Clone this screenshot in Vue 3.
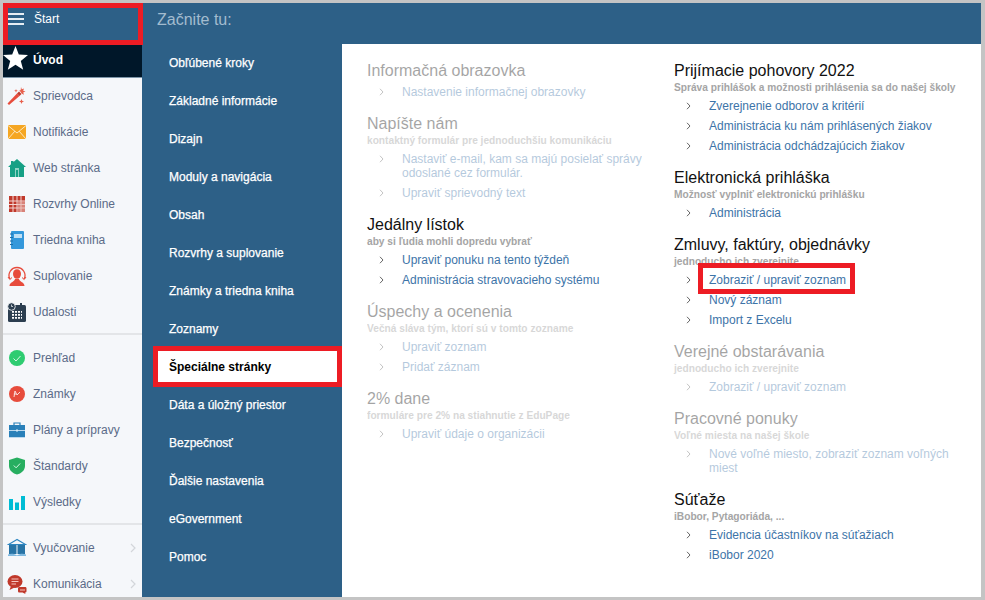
<script setup>
const star = '<path d="M12.5 0l3.3 8.6 9.2.5-7.2 5.8 2.4 8.9-7.700-5-7.700 5 2.400-8.900L0 9.100l9.200-.5z" fill="#fff"/>'
const icons = {
  wand: '<path d="M2 19l-1.500-1.500L10 7.500l2.500 2.500z" fill="#e74c3c"/><path d="M10 7.500l2.500 2.500 2-2L12 5.500z" fill="#c0392b"/><path d="M14 1l.8 2.300L17 2.500l-.8 2.300 2.300.8-2.300.8.800 2.300-2.200-1-1.300-2-1.300-1 1.500-.8zM14.500 13l.7 1.800 1.800.7-1.800.7-.7 1.800-.7-1.800-1.800-.7 1.800-.7zM9 3l.5 1.300 1.300.5-1.300.5L9 6.600l-.5-1.300-1.300-.5 1.300-.5z" fill="#e8604c"/>',
  mail: '<rect x="1" y="3" width="18" height="14" fill="#f5a623"/><path d="M1 3.500l9 7.500 9-7.500M1 17l7-8M19 17l-7-8" fill="none" stroke="#fde7bd" stroke-width="1"/>',
  home: '<path d="M10 1l9 8h-2v10H3V9H1l3-2.700V3h2.500v1.100z" fill="#16a085"/><rect x="8" y="10" width="4" height="9" fill="#8fd3c4"/><rect x="9" y="12" width="2" height="7" fill="#16a085"/>',
  grid: '<rect x="2" y="2" width="16" height="16" fill="#c0392b"/><path d="M2 7h16M2 10.500h16M2 14h16M6 2v16M10 2v16M14 2v16" stroke="#f3d6d2" stroke-width="1"/><rect x="10.500" y="7.500" width="7.500" height="10.500" fill="#e8b4ad" opacity=".6"/>',
  note: '<rect x="4" y="1" width="13" height="18" rx="1" fill="#3498db"/><rect x="7" y="4" width="8" height="4" fill="#bfe0f5"/><path d="M3 4h3M3 7.500h3M3 11h3M3 14.500h3" stroke="#1f6fa8" stroke-width="1.200"/>',
  person: '<path d="M2.800 13A8 8 0 1 1 17.200 13" fill="none" stroke="#e74c3c" stroke-width="1.300"/><path d="M1 11l1.800 2.500L5 11.500M15 11.500l2.200 2 1.800-2.500" fill="none" stroke="#e74c3c" stroke-width="1"/><ellipse cx="10" cy="8" rx="4" ry="4.800" fill="#e74c3c"/><path d="M2.500 20c0-4 5-4 5.500-7h4c.5 3 5.500 3 5.500 7z" fill="#e74c3c"/>',
  cal: '<rect x="1" y="3" width="18" height="17" rx="1.500" fill="#2c3e50"/><rect x="13" y="1" width="2" height="4" fill="#2c3e50"/><circle cx="4.500" cy="4.500" r="3.800" fill="#2c3e50" stroke="#fff" stroke-width=".8"/><path d="M4.500 2.500v2h1.500" fill="none" stroke="#fff" stroke-width=".7"/><path d="M5 9h10v1.800H5zM5 12h10v1.800H5zM5 15h10v1.800H5z" fill="#fff"/><path d="M7.500 9v8M10.500 9v8M13.500 9v8" stroke="#2c3e50" stroke-width="1"/>',
  ok: '<circle cx="10" cy="10" r="8" fill="#2ecc71"/><path d="M6.500 10.500l2.500 2.500 4.500-5" fill="none" stroke="#d6f7e3" stroke-width="1"/>',
  mark: '<circle cx="10" cy="10" r="8" fill="#e74c3c"/><path d="M7 13l1-6 2 4 3-3M6.800 10h2.500" fill="none" stroke="#fbdcd8" stroke-width="1"/>',
  case: '<path d="M7 5V3h6v2" fill="none" stroke="#2980b9" stroke-width="1.200"/><rect x="2" y="5" width="16" height="12" fill="#2980b9"/><path d="M2 10.500h16" stroke="#bcd9ee" stroke-width="1"/><rect x="9" y="9.500" width="2" height="2" fill="#d6e9f6"/><rect x="2" y="17" width="16" height="1" fill="#bcd9ee"/>',
  shield: '<path d="M10 1.500l8 2.500v6c0 4.500-4 7.500-8 8.500-4-1-8-4-8-8.500V4z" fill="#27ae60"/><path d="M6.800 9.500l2.300 2.300 4-4.300" fill="none" stroke="#d6f7e3" stroke-width="1"/>',
  bars: '<rect x="2" y="7" width="4" height="11" fill="#00bcd4"/><rect x="8" y="10.500" width="4" height="7.500" fill="#00bcd4"/><rect x="14" y="4" width="4" height="14" fill="#00bcd4"/>',
  book: '<path d="M10 1.500L1.500 6.500h17z" fill="none" stroke="#2e86c1" stroke-width="1.200"/><path d="M2 7h7.500v9H2zM18 7h-7.500v9H18z" fill="#2874a6"/><path d="M1 16.500c3-1 6-1 9 1 3-2 6-2 9-1v1.500H1z" fill="#7fb9e0"/>',
  chat: '<ellipse cx="8" cy="7.500" rx="7.500" ry="6.500" fill="#c0392b"/><path d="M4 12l-1.500 4 5-2.500z" fill="#c0392b"/><path d="M4.500 5h7M4.500 7.500h7M4.500 10h4.500" stroke="#f5c6c0" stroke-width="1"/><path d="M12 13h6c1 0 1.500.5 1.500 1.500v2.500c0 1-.5 1.500-1.500 1.500l.5 1.500-3-1.500h-3c-1 0-1.500-.5-1.500-1.500v-2.500c0-1 .5-1.500 1.500-1.500z" fill="#c0392b"/><path d="M13 16h5" stroke="#f5c6c0" stroke-width="1"/>'
}
const sideGroups = [
  [['Sprievodca','wand'],['Notifikácie','mail'],['Web stránka','home'],['Rozvrhy Online','grid'],['Triedna kniha','note'],['Suplovanie','person'],['Udalosti','cal']],
  [['Prehľad','ok'],['Známky','mark'],['Plány a prípravy','case'],['Štandardy','shield'],['Výsledky','bars']],
  [['Vyučovanie','book',true],['Komunikácia','chat',true]]
]
const menu = ['Obľúbené kroky','Základné informácie','Dizajn','Moduly a navigácia','Obsah','Rozvrhy a suplovanie','Známky a triedna kniha','Zoznamy','Špeciálne stránky','Dáta a úložný priestor','Bezpečnosť','Ďalšie nastavenia','eGovernment','Pomoc']
const leftCol = [
  {t:'Informačná obrazovka',off:true,l:['Nastavenie informačnej obrazovky']},
  {t:'Napíšte nám',s:'kontaktný formulár pre jednoduchšiu komunikáciu',off:true,l:['Nastaviť e-mail, kam sa majú posielať správy odoslané cez formulár.','Upraviť sprievodný text']},
  {t:'Jedálny lístok',s:'aby si ľudia mohli dopredu vybrať',l:['Upraviť ponuku na tento týždeň','Administrácia stravovacieho systému']},
  {t:'Úspechy a ocenenia',s:'Večná sláva tým, ktorí sú v tomto zozname',off:true,l:['Upraviť zoznam','Pridať záznam']},
  {t:'2% dane',s:'formuláre pre 2% na stiahnutie z EduPage',off:true,l:['Upraviť údaje o organizácii']}
]
const rightCol = [
  {t:'Prijímacie pohovory 2022',s:'Správa prihlášok a možnosti prihlásenia sa do našej školy',l:['Zverejnenie odborov a kritérií','Administrácia ku nám prihlásených žiakov','Administrácia odchádzajúcich žiakov']},
  {t:'Elektronická prihláška',s:'Možnosť vyplniť elektronickú prihlášku',l:['Administrácia']},
  {t:'Zmluvy, faktúry, objednávky',s:'jednoducho ich zverejnite',mark:0,l:['Zobraziť / upraviť zoznam','Nový záznam','Import z Excelu']},
  {t:'Verejné obstarávania',s:'jednoducho ich zverejnite',off:true,l:['Zobraziť / upraviť zoznam']},
  {t:'Pracovné ponuky',s:'Voľné miesta na našej škole',off:true,l:['Nové voľné miesto, zobraziť zoznam voľných miest']},
  {t:'Súťaže',s:'iBobor, Pytagoriáda, ...',l:['Evidencia účastníkov na súťažiach','iBobor 2020']}
]
const columns = [leftCol, rightCol]
</script>

<template>
  <div class="page">
    <div class="frame">
      <aside class="side">
        <div class="start">
          <span class="burger"><i></i><i></i><i></i></span>
          <span>Štart</span>
        </div>
        <div class="intro">
          <svg class="star" width="25" height="25" viewBox="0 0 25 25" v-html="star"></svg>
          <span>Úvod</span>
        </div>
        <div class="groups">
          <div v-for="(g, i) in sideGroups" :key="i" class="group">
            <div v-for="it in g" :key="it[0]" class="item">
              <svg class="ic" width="20" height="20" viewBox="0 0 20 20" v-html="icons[it[1]]"></svg>
              <span class="label">{{ it[0] }}</span>
              <svg v-if="it[2]" class="more" width="6" height="10" viewBox="0 0 6 10"><path d="M1 1l4 4-4 4" fill="none" stroke="#d3d6da" stroke-width="1.200"/></svg>
            </div>
          </div>
        </div>
      </aside>
      <div class="main">
        <header class="top">Začnite tu:</header>
        <div class="body">
          <nav class="menu">
            <div v-for="m in menu" :key="m" class="mi" :class="{ sel: m === 'Špeciálne stránky' }">{{ m }}</div>
          </nav>
          <section class="panel">
            <div v-for="(col, ci) in columns" :key="ci" class="col">
              <div v-for="b in col" :key="b.t" class="block" :class="{ off: b.off }">
                <h3>{{ b.t }}</h3>
                <p v-if="b.s" class="sub">{{ b.s }}</p>
                <ul>
                  <li v-for="(l, li) in b.l" :key="l">
                    <svg class="chev" width="5" height="8" viewBox="0 0 5 8"><path d="M1 .8L4 4 1 7.200" fill="none" stroke="#666" stroke-width="1"/></svg>
                    <a :class="{ marked: b.mark === li }">{{ l }}</a>
                  </li>
                </ul>
              </div>
            </div>
          </section>
        </div>
      </div>
    </div>
  </div>
</template>

<style>
html, body { margin: 0; background: #c4c4c4; }
</style>

<style scoped>
.page {
  width: 985px;
  height: 600px;
  box-sizing: border-box;
  padding: 3px 4px 3px 3px;
  background: #c4c4c4;
  font-family: "Liberation Sans", Arial, sans-serif;
  overflow: hidden;
}
.frame { display: flex; height: 594px; overflow: hidden; background: #2d6087; }
.side { width: 139px; flex: none; background: #f5f7fa; display: flex; flex-direction: column; position: relative; z-index: 1; }
.start {
  height: 42px;
  flex: none;
  box-sizing: border-box;
  background: #2d6087;
  border: 5px solid #ed1c24;
  width: 140px;
  display: flex;
  align-items: flex-start;
  padding: 4px 0 0 0;
  color: #fff;
  font-size: 12px;
  line-height: 14px;
  gap: 10px;
}
.burger { width: 16px; display: flex; flex-direction: column; gap: 3px; padding-top: 1px; }
.burger i { display: block; height: 2px; background: #e6edf3; }
.intro {
  height: 33px;
  flex: none;
  background: #001729;
  display: flex;
  align-items: center;
  color: #fff;
  font-weight: 700;
  font-size: 12px;
  padding: 0 0 3px 30px;
  position: relative;
  border-bottom: 1px solid #7d95a8;
  box-sizing: border-box;
}
.star { position: absolute; left: 0; top: 1px; }
.group { border-bottom: 2px solid #e3e5e8; padding: 0 0 3px; }
.group + .group { padding-top: 5px; }
.group:last-child { border-bottom: 0; }
.item {
  height: 36px;
  display: flex;
  align-items: center;
  padding-left: 4px;
  color: #5b6b88;
  font-size: 12px;
  position: relative;
}
.ic { flex: none; margin-right: 6px; }
.more { position: absolute; left: 127px; top: 13px; }
.main { flex: 1; display: flex; flex-direction: column; min-width: 0; }
.top { height: 41px; box-sizing: border-box; padding: 8px 0 0 15px; font-size: 16px; line-height: 18px; color: #a3bccf; background: #2d6087; flex: none; }
.body { flex: 1; display: flex; min-height: 0; }
.menu { width: 200px; flex: none; background: #2d6087; }
.mi {
  height: 38px;
  box-sizing: border-box;
  margin-left: 13px;
  padding-left: 14px;
  display: flex;
  align-items: center;
  color: #fff;
  font-size: 12px;
  -webkit-text-stroke: .25px currentColor;
  position: relative;
}
.mi.sel { color: #000; z-index: 0; font-weight: 700; -webkit-text-stroke: 0; }
.mi.sel::before {
  content: "";
  position: absolute;
  left: -2px; top: -2px;
  width: 189px;
  height: 41px;
  box-sizing: border-box;
  background: #fff;
  border: 5px solid #ed1c24;
  z-index: -1;
}
.panel { flex: 1; background: #fff; display: flex; padding: 17px 0 0 25px; }
.col { width: 307px; flex: none; padding-right: 25px; box-sizing: border-box; }
.block { margin-bottom: 12px; }
.block.off { opacity: .38; }
h3 { margin: 0; font-size: 16px; line-height: 20px; font-weight: 400; color: #111; }
.sub { margin: 0; font-size: 10.18px; line-height: 14px; font-weight: 700; color: #a5a5a5; white-space: nowrap; }
.block.off .sub { color: #999; }
ul { list-style: none; margin: 1px 0 0; padding: 0; }
li { display: flex; padding: 3px 0; font-size: 12px; line-height: 14px; position: relative; }
.chev { flex: none; margin: 3px 0 0 12px; }
a { margin-left: 18px; color: #3d74a8; position: relative; }
a.marked::after {
  content: "";
  position: absolute;
  left: -11px; right: -9px; top: -10px; bottom: -7px;
  border: 5px solid #ed1c24;
  pointer-events: none;
}
</style>
